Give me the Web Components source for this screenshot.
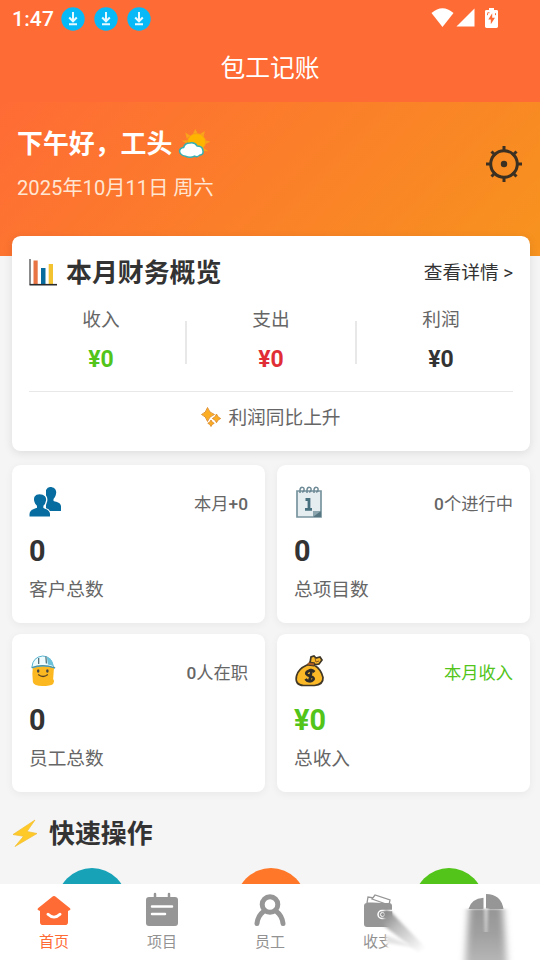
<!DOCTYPE html>
<html lang="zh-CN">
<head>
<meta charset="utf-8">
<title>包工记账</title>
<style>
html,body{margin:0;height:100%;overflow:hidden}
body{background:#f5f5f5;color:#333;font-family:Roboto,"Noto Sans CJK SC",sans-serif}
</style>
</head>
<body>
<ledger-app></ledger-app>
<script>
const define = (name, html) => customElements.define(name, class extends HTMLElement {
  constructor() {
    super();
    this.attachShadow({mode: 'open'});
  }
  connectedCallback() {
    const t = document.createElement('template');
    t.innerHTML = typeof html === 'function' ? html(this) : html;
    this.shadowRoot.replaceChildren(t.content.cloneNode(true));
  }
});

const icons = {
  download: ['0 0 24 24', '<circle cx="12" cy="12" r="11.700" fill="#08b9f8"/><path d="M12 5v9M8.200 10.500l3.800 3.800 3.800-3.800M8 17.200h8" fill="none" stroke="#e8faff" stroke-width="2"/>'],
  wifi: ['0 0 24 19', '<path d="M.5 5Q12-4.500 23.500 5L12 19Z" fill="#fff"/>'],
  signal: ['0 0 20 20', '<path d="M19.500.5v19H.5Z" fill="#fff"/>'],
  battery: ['0 0 13 21', '<path d="M4 0h5v2h2.500q1.500 0 1.500 1.500v16q0 1.500-1.500 1.500h-10Q0 21 0 19.500v-16Q0 2 1.500 2H4Z" fill="#fff"/><path d="M7.200 5.500 3.300 12h2.500v5L10 10.200H7.200Z" fill="#ff6b35"/><path d="M2.500 5.500v2M2.500 5h2M10.500 5.500v2" stroke="#ff6b35"/>'],
  sun: ['0 0 32 32', '<g fill="#f9a31c"><path d="m14.500 5 2.200-5 2.500 5ZM21 5.500l5-3.500-1 6ZM25.500 11.500l6 1.500-5.500 3ZM24 19l5.500 4-6.500-.5ZM12 7 7 3.500 8.500 10ZM9.500 11.500l-6 .5 5 3Z"/></g><circle cx="18" cy="13.500" r="8.800" fill="#ffb400" stroke="#f89a1d" stroke-width=".8"/><path d="M7 28q-5-1-5.500-5 0-3.500 4-4 1-4.500 6-4.500 5-1 7 3 5 0 5.500 4 1.500 5-3 5.500-2 2.500-5 1-4 2.500-9 0Z" fill="#fff" stroke="#35afb0" stroke-width="1.500"/>'],
  gear: ['0 0 38 38', '<g fill="none" stroke="#3b3022" stroke-width="3"><circle cx="19" cy="19" r="13.300"/><path d="M19 1v6M19 31v6M1 19h6M31 19h6M6.500 6.500l4 4M27.500 27.500l4 4M31.500 6.500l-4 4M10.500 27.500l-4 4"/></g><circle cx="19" cy="19" r="3.200" fill="#3b3022"/>'],
  chart: ['0 0 28 28', '<path d="M1 1v25.500" stroke="#777" stroke-width="1.700"/><path d="M4.500 2.500h4.200v24H4.500Z" fill="#e87343"/><path d="M12 10h4.500v16H12Z" fill="#086b9d"/><path d="M19.700 6H24v20h-4.300Z" fill="#f4c331"/><path d="M.5 26.700H28" stroke="#292b2d" stroke-width="1.600"/>'],
  spark: ['0 0 20 20', '<g fill="#fbae24" stroke="#dc8c2d" stroke-width=".9"><path d="M6.500.5Q8 6 13.500 7.500 8 9 6.500 14.500 5 9 .5 7.500 5 6 6.500.5Z"/><path d="M15.500 7q1 3.500 4.200 4.500-3.200 1-4.200 4.200-1-3.200-4.200-4.200 3.200-1 4.200-4.500ZM10 13q.8 2.500 3.200 3.300Q10.800 17 10 19.500 9.200 17 6.800 16.300 9.200 15.500 10 13Z"/></g>'],
  people: ['0 0 32 32', '<g fill="#076c9f"><path d="M21 1c4.500 0 7 3 6 7-.3 2-1.500 4-2.500 5v2c4 1 7 2 7.500 5v5H17V4q1.500-3 4-3Z"/><path d="M10.500 7.500C5 7.500 3.500 12 4.800 16c.4 2 1.300 3 2.500 4v2C3.500 23 .5 24 .5 28v2.500h20.500V28c0-4-3-5-6-6v-2c1.500-1 2.200-3 2.600-5 .8-4-1.500-7.500-7.100-7.500Z" stroke="#fff" stroke-width="1.300"/></g><path d="M.5 28q0-4 6.800-6h6.700q7 2 7 6v2.500H.5Z" fill="#076c9f"/>'],
  calendar: ['0 0 28 32', '<path d="M2 5h24v26H2Z" fill="#e6edf1" stroke="#78949e" stroke-width="1.700"/><path d="M18 31v-6h8v6Z" fill="#567681"/><path d="m18 31 8-6h-8Z" fill="#8ba4ad"/><g fill="none" stroke="#6d8995" stroke-width="1.500"><path d="M5 7V4c0-4 5-3 4 0q0 2-2 2M12 7V4c0-4 5-3 4 0q0 2-2 2M19 7V4c0-4 5-3 4 0q0 2-2 2"/></g><path d="M10.500 13.500h3.500v10M10 23.300h7" fill="none" stroke="#48717f" stroke-width="2.800"/>'],
  worker: ['0 0 28 32', '<path d="M3 11q-1 7 0 16 1 4 10 4 8 0 11-2l1-3-1-2 1-13Z" fill="#fbb820"/><path d="M2 12Q3 2 13 1q9 0 11 10l2 2q-12-4-24 0Z" fill="#eefcff" stroke="#56b2ce"/><path d="M9 3v6M16.500 1.500l.5 7" stroke="#4d6d76" stroke-width="1.300"/><path d="M17.500 2q6 2 7 9l-6-1.500Z" fill="#6bc1da"/><path d="M2 12.500q11-4 24 .5" fill="none" stroke="#4b8fa1" stroke-width="1.200"/><ellipse cx="8.500" cy="16" rx="1.300" ry="1.700" fill="#444"/><ellipse cx="18" cy="16" rx="1.300" ry="1.700" fill="#444"/><path d="M8.500 19.500q5 4 10 0" fill="none" stroke="#5b4424" stroke-width="1.300"/>'],
  money: ['0 0 30 32', '<path d="M12 10Q3 14 1.500 21q-2 9 7 9.500h11q9-1 8.500-8Q26 14 19 10l5-1 3-4-2-3-4 1-2-2-3 1-1 6Z" fill="#fbb927" stroke="#403727" stroke-width="1.700"/><path d="m12 10 7 1 1-3-6-1" fill="#ab5c22" stroke="#403727"/><path d="m20 3 1 4 3-1" fill="none" stroke="#8d5a22"/><path d="M19.500 17q-3-3-6-1-4 2-1 4l5 2q3 2-1 4-4 1-6-2M17 14l-3 13.500" fill="none" stroke="#302d28" stroke-width="2.700"/>'],
  lightning: ['0 0 28 28', '<path d="M23 1 1 15.500l10.500 1.800L3 27.500 25 14.500l-10-2Z" fill="#ffc928" stroke="#f1bd30" stroke-width=".7"/>'],
  home: ['0 0 34 32', '<path d="M17 1q-1 0-2 1L1 14q-1 1 0 2l2 1v12q0 3 3 3h22q3 0 3-3V17l2-1q1-1 0-2L19 2q-1-1-2-1Z" fill="#ff6b35"/><path d="M11 20.500q6 6 12 0" fill="none" stroke="#fff" stroke-width="3" stroke-linecap="round"/>'],
  project: ['0 0 34 34', '<rect x="1" y="4" width="32" height="29" rx="3" fill="#969696"/><path d="M10 1v5M24 1v5" stroke="#969696" stroke-width="2.500" stroke-linecap="round"/><path d="M7 13.500h20M7 21h13" stroke="#fff" stroke-width="2.500" stroke-linecap="round"/>'],
  employee: ['0 0 32 34', '<g fill="none" stroke="#969696" stroke-width="5" stroke-linecap="round"><circle cx="16" cy="11.500" r="7.800"/><path d="M9.500 18.500q-5.500 4-6.500 12M22.500 18.500q5.500 4 6.500 12"/></g>'],
  wallet: ['0 0 30 34', '<g fill="#fff" stroke="#969696" stroke-width="1.300"><path d="m4 10 1-6 20 3v4Z"/><path d="m9 6 3-4 15 5-1 5Z"/></g><rect x="1" y="10" width="28" height="24" rx="3" fill="#969696"/><path d="M30 17.500H19a4 4 0 0 0 0 8h11Z" fill="#969696" stroke="#fff" stroke-width="1.500"/><circle cx="19.500" cy="21.500" r="2" fill="none" stroke="#fff"/>'],
  pie: ['0 0 36 18', '<path d="M.500 17Q3 6 15.500 5v12ZM18 17V1q15 0 17.500 16Z" fill="#969696"/>']
};
define('ledger-icon', el => {
  const [box, art] = icons[el.getAttribute('name')];
  return `<style>:host{display:block;flex:none}svg{display:block;width:100%;height:100%;overflow:visible}</style><svg viewBox="${box}" preserveAspectRatio="none">${art}</svg>`;
});

define('phone-status', `<style>
:host{display:flex;align-items:center;height:37px;padding:0 42px 0 12px;box-sizing:border-box;color:#fff;font-size:21px;font-weight:500;letter-spacing:.2px}
ledger-icon[name=download]{width:24px;height:24px;margin-right:9px}span{margin-right:7px}
.right{margin-left:auto;display:flex;align-items:center;padding-bottom:2px}
</style><span>1:47</span><ledger-icon name="download"></ledger-icon><ledger-icon name="download"></ledger-icon><ledger-icon name="download"></ledger-icon>
<div class="right"><ledger-icon name="wifi" style="width:23px;height:19px;margin-right:2px"></ledger-icon><ledger-icon name="signal" style="width:19px;height:19px;margin-right:10px"></ledger-icon><ledger-icon name="battery" style="width:13px;height:20px"></ledger-icon></div>`);

define('hero-banner', `<style>
:host{display:flex;justify-content:space-between;height:154px;box-sizing:border-box;padding:21px 17px 0 17px;background:linear-gradient(135deg,#ff6b35,#f7931e);color:#fff}
.hello{display:flex;align-items:center;height:38px;font-size:25.900px;font-weight:700}.hello span{margin-top:-2px}.hello ledger-icon{width:33px;height:31px;margin:4px 0 0 6px}
.date{height:48px;line-height:48px;margin-top:3px;font-size:20.200px;color:#ffe6d3;white-space:nowrap}
.gear{width:38px;height:38px;margin-top:22px}
</style><div><div class="hello"><span>下午好，工头</span><ledger-icon name="sun"></ledger-icon></div><div class="date">2025年10月11日 周六</div></div><ledger-icon class="gear" name="gear"></ledger-icon>`);

define('money-column', el => `<style>
:host{display:flex;flex:1;flex-direction:column;align-items:center}
.label{font-size:18.700px;line-height:30px;color:#666}.value{font-size:23px;line-height:30px;margin-top:10px;font-weight:700;color:${el.getAttribute('color')}}
</style><div class="label"><slot></slot></div><div class="value">${el.getAttribute('value')}</div>`);

define('finance-card', `<style>
:host{display:block;box-sizing:border-box;width:518px;height:215px;margin:-20px 0 0 12px;padding:17px;background:#fff;border-radius:8.600px;box-shadow:0 2px 10px #0000001a;position:relative}
.head,.title,.columns,.trend{display:flex;align-items:center}.head{height:36px;justify-content:space-between}.title{font-size:25.900px;font-weight:700}
.title span{margin-top:-2px}.title ledger-icon{width:28px;height:28px;margin:2px 9px 0 0}.more{font-size:18.700px;margin-top:-2px}
.columns{height:86px;align-items:flex-start;padding-top:16px;box-sizing:border-box}.sep{width:2px;height:43px;background:#e8e8e8;margin:16px 12px 0}
.trend{margin-top:16px;border-top:1px solid #e8e8e8;height:51px;justify-content:center;font-size:18.700px;color:#666}.trend ledger-icon{width:20px;height:20px;margin:0 7px 2px 0}.trend span{margin-top:-4px}
</style><div class="head"><div class="title"><ledger-icon name="chart"></ledger-icon><span>本月财务概览</span></div><span class="more">查看详情 &gt;</span></div>
<div class="columns"><money-column value="¥0" color="#52c41a">收入</money-column><div class="sep"></div><money-column value="¥0" color="#e12e36">支出</money-column><div class="sep"></div><money-column value="¥0" color="#333">利润</money-column></div>
<div class="trend"><ledger-icon name="spark"></ledger-icon><span>利润同比上升</span></div>`);

define('stat-card', el => `<style>
:host{display:block;box-sizing:border-box;height:158px;padding:20px 17px 0;background:#fff;border-radius:8.600px;box-shadow:0 2px 8px #0000000e;color:#666}
.top{display:flex;align-items:center;justify-content:space-between;height:34px}.note{font-size:17.280px;color:${el.hasAttribute('green') ? '#52c41a' : '#666'}}.note b{font-weight:500}
.value{font-size:28.800px;line-height:38px;margin-top:13px;font-weight:700;color:${el.hasAttribute('green') ? '#52c41a' : '#333'}}
.label{font-size:18.700px;line-height:28px;margin-top:6px}
</style><div class="top"><ledger-icon name="${el.getAttribute('icon')}" style="width:${el.getAttribute('iw')}px;height:32px;margin-left:${el.getAttribute('ix') || 0}px"></ledger-icon><span class="note">${el.getAttribute('note').replace(/[+\d]+/g, '<b>$&</b>')}</span></div><div class="value">${el.getAttribute('value')}</div><div class="label"><slot></slot></div>`);

define('quick-actions', `<style>
:host{display:block;height:92px;overflow:hidden}.title{height:42px;margin-top:20px;padding-left:12px;display:flex;align-items:center;font-size:25.900px;font-weight:700}.title span{margin-top:-3px}.title ledger-icon{width:28px;height:28px;margin-right:9px}
.actions{display:flex;justify-content:space-between;padding:0 56px 0 57px;margin-top:14px}.actions i{width:70px;height:70px;border-radius:50%;background:var(--c)}
</style><div class="title"><ledger-icon name="lightning"></ledger-icon><span>快速操作</span></div><div class="actions"><i style="--c:#17a2b8"></i><i style="--c:#ff7728"></i><i style="--c:#52c41a"></i></div>`);

define('nav-item', el => `<style>
:host{display:flex;flex:1;flex-direction:column;align-items:center;padding-top:9px;font-size:15px;line-height:22px;color:#929292}:host([active]){color:#ff6b35}
ledger-icon{height:34px;margin-bottom:4px}
</style><ledger-icon name="${el.getAttribute('icon')}" style="width:${el.getAttribute('iw')}px;${({pie: 'height:17px', home: 'height:30px;margin-top:2px;margin-bottom:6px'})[el.getAttribute('icon')] || ''}"></ledger-icon><span><slot></slot></span>`);

define('bottom-nav', `<style>
:host{display:flex;height:76px;background:#fff;position:relative;overflow:hidden}
.smear{position:absolute;left:370px;top:0;width:170px;height:76px}
</style><nav-item active icon="home" iw="34">首页</nav-item><nav-item icon="project" iw="34">项目</nav-item><nav-item icon="employee" iw="32">员工</nav-item><nav-item icon="wallet" iw="30">收支</nav-item><nav-item icon="pie" iw="36"></nav-item>
<svg class="smear" viewBox="0 0 170 76"><defs>
<linearGradient id="fade" gradientUnits="userSpaceOnUse" x1="14" y1="28" x2="54" y2="66"><stop stop-color="#858585"/><stop offset=".35" stop-color="#bdbdbd"/><stop offset="1" stop-color="#fff"/></linearGradient>
<linearGradient id="column" x1="0" x2="0" y1="0" y2="1"><stop stop-color="#969696"/><stop offset=".45" stop-color="#a0a0a0"/><stop offset="1" stop-color="#b8b8b8"/></linearGradient>
<filter id="soft" x="-50%" y="-20%" width="200%" height="140%"><feGaussianBlur stdDeviation="1.700 .5"/></filter><filter id="side" x="-50%" y="-20%" width="200%" height="140%"><feGaussianBlur stdDeviation="3.500 1"/></filter><filter id="wide" x="-50%" y="-50%" width="200%" height="200%"><feGaussianBlur stdDeviation="1.500"/></filter></defs>
<path d="M24 41H45V76H17V46Z" fill="#fff" filter="url(#soft)"/>
<path d="M15 25 22 29 58 66 48 68 13 41Z" fill="url(#fade)" filter="url(#wide)"/>
<path d="M16 51 44 63 17 59Z" fill="#e3e3e3" filter="url(#wide)"/>
<path d="M99 25h34l4 55H95Z" fill="url(#column)" filter="url(#side)"/>
<path d="M114 24h4l-1 24h-2Z" fill="#fff" opacity=".55" filter="url(#soft)"/>
</svg>`);

define('ledger-app', `<style>
:host{display:grid;grid-template-rows:102px 782px 76px;width:540px;height:960px;background:#f5f5f5;overflow:hidden}
header{background:#ff6b35;color:#fff}.title{text-align:center;font-size:24.800px;line-height:64px}
main{overflow:hidden;min-height:0}.stats{display:grid;grid-template-columns:253px 253px;gap:11px 12px;margin:14px 0 0 12px}
</style><header><phone-status></phone-status><div class="title">包工记账</div></header>
<main><hero-banner></hero-banner><finance-card></finance-card><section class="stats">
<stat-card icon="people" iw="32" note="本月+0" value="0">客户总数</stat-card>
<stat-card icon="calendar" iw="28" ix="1" note="0个进行中" value="0">总项目数</stat-card>
<stat-card icon="worker" iw="27" ix="1" note="0人在职" value="0">员工总数</stat-card>
<stat-card icon="money" iw="30" ix="1" note="本月收入" value="¥0" green>总收入</stat-card>
</section><quick-actions></quick-actions></main><bottom-nav></bottom-nav>`);
</script>
</body>
</html>
